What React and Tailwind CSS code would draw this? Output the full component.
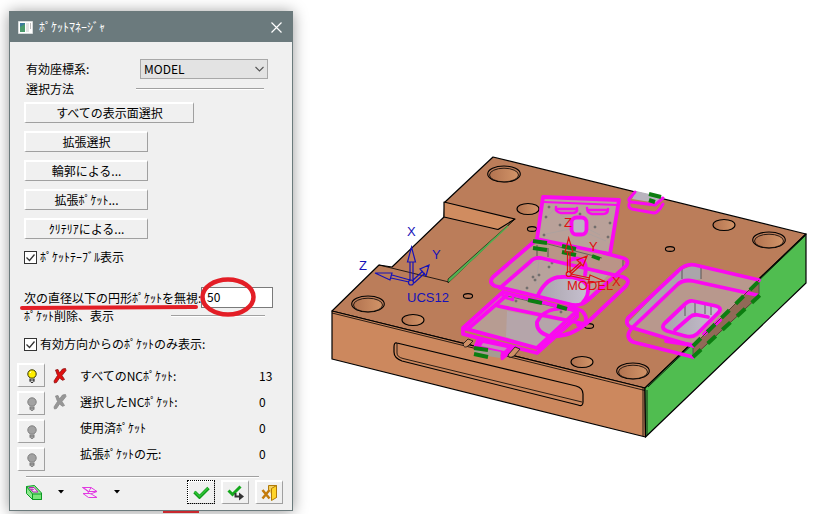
import React from "react";

const face =
  "cursor-default border-t-2 border-l-2 border-r border-b border-t-white border-l-white border-r-[#a0a0a0] border-b-[#a0a0a0] bg-[#f0f0f0]";

function PushButton({ children, wide = false }) {
  return (
    <button type="button" className={`${face} h-[21px] whitespace-nowrap text-center leading-none ${wide ? "w-[170px]" : "w-[124px]"}`}>
      {children}
    </button>
  );
}

function Rule({ className }) {
  return <div className={`h-[2px] border-t border-t-[#a0a0a0] border-b border-b-white ${className}`} />;
}

function CheckRow({ id, children }) {
  return (
    <div className="flex h-5 items-center gap-[3px] pl-[14px]">
      <span className="grid size-[13px] shrink-0">
        <input id={id} type="checkbox" defaultChecked className="col-start-1 row-start-1 size-[13px] appearance-none border border-[#333] bg-white" />
        <svg viewBox="0 0 13 13" className="pointer-events-none col-start-1 row-start-1 size-[13px]" aria-hidden="true">
          <path d="M2.500 6.500l3 3 5-6" fill="none" stroke="#333" strokeWidth="1.3" />
        </svg>
      </span>
      <label htmlFor={id} className="whitespace-nowrap">{children}</label>
    </div>
  );
}

function Bulb({ on }) {
  return (
    <svg viewBox="0 0 12 14" className="h-[14px] w-3" aria-hidden="true">
      <path d="M4 9.500v2.800l1 1h2l1-1V9.500" fill={on ? "#fff" : "#aaa"} stroke={on ? "#111" : "#777"} />
      <circle cx="6" cy="5" r="4.200" fill={on ? "#ffee00" : "#a2a2a2"} stroke={on ? "#333300" : "#808080"} />
      {on && <path d="M4 4l1-1.500" stroke="#fff" />}
      <path d="M4 11h4" stroke={on ? "#111" : "#777"} />
    </svg>
  );
}

function Cross({ color, edge }) {
  return (
    <svg viewBox="0 0 14 16" className="h-4 w-[14px]" aria-hidden="true">
      <path d="M2.500 2L5 1.500 6.500 5 9.500 1l3-.5.5 2L9 7.500l2.500 4-2 .8L6.500 10 3.500 14.500l-2 .5-.5-2L4.500 7.500z" fill={color} stroke={edge} strokeWidth=".8" />
    </svg>
  );
}

const pockets = [
  { name: "すべてのNCﾎﾟｹｯﾄ:", count: 13, on: true, cross: ["#e01010", "#8d1010"] },
  { name: "選択したNCﾎﾟｹｯﾄ:", count: 0, cross: ["#979797", "#8a8a8a"] },
  { name: "使用済ﾎﾟｹｯﾄ", count: 0 },
  { name: "拡張ﾎﾟｹｯﾄの元:", count: 0 },
];

function Caret() {
  return (
    <svg viewBox="0 0 6 4" className="h-1 w-[6px]" aria-hidden="true">
      <path d="M0 0h6L3 3.500z" fill="#000" />
    </svg>
  );
}

function PocketDialog() {
  return (
    <section className="w-[284px] border border-[#6b7a7c] bg-[#f0f0f0] text-black shadow-[0_1px_14px_rgba(0,0,0,0.4)]">
      <header className="flex h-[30px] items-center bg-[#6b7a7d] pl-2 pr-[10px] text-white">
        <svg viewBox="0 0 15 13" className="h-[13px] w-[15px]" aria-hidden="true">
          <path d="M.5 .5h14v12H.5z" fill="#fff" stroke="#d5dada" />
          <path d="M2 2h5v9H2z" fill="#3d7c9c" />
          <path d="M2 6l5-3v8H2z" fill="#4b9a6c" />
          <path d="M8 2h3v9H8z" fill="#e3e3e3" />
          <path d="M12 2h1v6h-1z" fill="#bbb" />
        </svg>
        <h1 className="ml-[6px] flex-1 text-[12px]">ﾎﾟｹｯﾄﾏﾈｰｼﾞｬ</h1>
        <button type="button" aria-label="閉じる">
          <svg viewBox="0 0 11 11" className="size-[11px]" aria-hidden="true">
            <path d="M.5 .5l10 10M10.500 .5l-10 10" stroke="#fff" strokeWidth="1.2" />
          </svg>
        </button>
      </header>

      <form className="pt-[17px] pb-[6px]">
        <div className="flex h-5 items-center pl-4">
          <label htmlFor="ucs" className="w-[114px]">有効座標系:</label>
          <div className="grid h-5 w-32">
            <select id="ucs" className="col-start-1 row-start-1 h-5 appearance-none border border-[#a8a8a8] bg-[#e3e3e3] pl-[3px] leading-none">
              <option>MODEL</option>
            </select>
            <svg viewBox="0 0 9 6" className="pointer-events-none col-start-1 row-start-1 mr-1 h-[6px] w-[9px] self-center justify-self-end" aria-hidden="true">
              <path d="M.5 1l4 4 4-4" fill="none" stroke="#555" strokeWidth="1.1" />
            </svg>
          </div>
        </div>
        <div className="flex h-5 items-center pl-4">
          <h2 className="w-[110px]">選択方法</h2>
          <Rule className="w-32" />
        </div>

        <div className="mt-[3px] flex flex-col items-start gap-2 pl-[14px]">
          <PushButton wide>すべての表示面選択</PushButton>
          <PushButton>拡張選択</PushButton>
          <PushButton>輪郭による...</PushButton>
          <PushButton>拡張ﾎﾟｹｯﾄ...</PushButton>
          <PushButton>ｸﾘﾃﾘｱによる...</PushButton>
        </div>

        <div className="mt-2">
          <CheckRow id="table">ﾎﾟｹｯﾄﾃｰﾌﾞﾙ表示</CheckRow>
        </div>

        <div className="relative mt-5 flex h-[21px] items-center pl-[14px]">
          <label htmlFor="diameter" className="w-[177px] whitespace-nowrap">次の直径以下の円形ﾎﾟｹｯﾄを無視:</label>
          <input id="diameter" type="text" defaultValue="50" className="h-[21px] w-[72px] border border-[#7a7a7a] bg-white pl-[5px] pb-[3px]" />
          <svg viewBox="0 0 260 44" className="pointer-events-none absolute -top-3 left-2 h-11 w-[260px]" aria-hidden="true">
            <path d="M4 33L178 32" stroke="#e31e26" strokeWidth="4" strokeLinecap="round" />
            <ellipse cx="210" cy="22" rx="25.500" ry="17.500" fill="none" stroke="#e31e26" strokeWidth="4.500" />
          </svg>
        </div>
        <div className="flex h-4 items-center pl-[14px]">
          <h2 className="w-[147px]">ﾎﾟｹｯﾄ削除、表示</h2>
          <Rule className="w-[94px]" />
        </div>

        <div className="mt-[10px]">
          <CheckRow id="direction">有効方向からのﾎﾟｹｯﾄのみ表示:</CheckRow>
        </div>

        <div className="mt-[9px] flex pl-[7px]">
          <div className="flex w-9 flex-col gap-1">
            {pockets.map((p) => (
              <button key={p.name} type="button" aria-label={p.name} className={`${face} grid h-6 w-7 place-items-center`}>
                <Bulb on={p.on} />
              </button>
            ))}
          </div>
          <dl className="flex-1">
            {pockets.map((p) => (
              <div key={p.name} className="flex h-[26px] items-center">
                <dt className="flex flex-1 items-center">
                  <span className="w-[27px]">{p.cross && <Cross color={p.cross[0]} edge={p.cross[1]} />}</span>
                  {p.name}
                </dt>
                <dd className="w-[33px]">{p.count}</dd>
              </div>
            ))}
          </dl>
        </div>

        <Rule className="mt-[5px] ml-4 w-[233px]" />

        <div className="mt-[2px] flex h-6 items-center pl-4 pr-[9px]">
          <button type="button" aria-label="ﾎﾟｹｯﾄ形状" className="flex items-center gap-4">
            <svg viewBox="0 0 16 15" className="h-[15px] w-4" aria-hidden="true">
              <path d="M.5 1.500l8-1 7 7.500v6.500h-9l-6-6z" fill="#8de88d" stroke="#0b9a24" />
              <path d="M6.500 9h9v5.500h-9z" fill="#7ae57a" stroke="#0b9a24" />
              <path d="M.5 1.500l6 7.500" stroke="#0b9a24" />
              <path d="M3 2.500h5l4 4.500h-5z" fill="#f8d5f8" stroke="#b525b5" />
              <path d="M6 3v3M8 4.500H5" stroke="#b525b5" strokeWidth=".7" />
            </svg>
            <Caret />
          </button>
          <button type="button" aria-label="輪郭形状" className="ml-[18px] flex items-center gap-4">
            <svg viewBox="0 0 16 13" className="h-[13px] w-4" fill="none" stroke="#e23ae2" aria-hidden="true">
              <path d="M.5 1.500h8.500l6 4H6zM1 7.500h7.500l6.500 4H6.500zM.5 1.500l1 0 5 4M9 1.500L6 7M15 5.500L8.500 8" />
            </svg>
            <Caret />
          </button>
          <div className="ml-auto flex gap-[6px]">
            <button type="button" aria-label="OK" className={`${face} grid h-6 w-7 place-items-center outline-1 -outline-offset-1 outline-dotted outline-black`}>
              <svg viewBox="0 0 17 13" className="h-[13px] w-[17px]" aria-hidden="true">
                <path d="M1.500 6l5 5L15.500 2" fill="none" stroke="#129c1b" strokeWidth="3.500" />
                <path d="M1.500 5.500l5 5L15 2" fill="none" stroke="#2fc436" strokeWidth="1.500" />
              </svg>
            </button>
            <button type="button" aria-label="適用" className={`${face} grid h-6 w-7 place-items-center`}>
              <svg viewBox="0 0 18 16" className="h-4 w-[18px]" aria-hidden="true">
                <path d="M1.500 5.500l4 4 8-8" fill="none" stroke="#14a81c" strokeWidth="3" />
                <path d="M8.500 8v3.500h4" fill="none" stroke="#333" strokeWidth="2" />
                <path d="M12 7.500l5 4-5 4z" fill="#333" />
              </svg>
            </button>
            <button type="button" aria-label="終了" className={`${face} grid h-6 w-7 place-items-center`}>
              <svg viewBox="0 0 17 17" className="size-[17px]" aria-hidden="true">
                <path d="M7.500 6V1.500h8v12h-3" fill="#f3d060" stroke="#b07a08" />
                <path d="M10.500 4.500l5-3v12l-5 3z" fill="#ffd42a" stroke="#b07a08" />
                <path d="M1.500 6l7 8.500M8.500 6l-7 8.500" stroke="#c47b0c" strokeWidth="2.500" />
              </svg>
            </button>
          </div>
        </div>
      </form>
    </section>
  );
}

const boreHoles = [[504, 174], [368, 304], [769, 240], [633, 371]];
const pinHoles = [[528, 209], [413, 320], [724, 225], [582, 362]];
const tapHoles = [[532, 229], [468, 296], [670, 249], [589, 326]];
const screws = [[549, 207], [546, 217], [560, 225], [544, 235], [580, 214], [595, 227], [610, 223], [608, 237], [549, 267], [552, 263], [533, 277], [535, 280], [539, 275], [527, 288], [516, 301], [561, 312]];

function MoldPlate() {
  return (
    <svg viewBox="293 0 527 514" className="block h-auto w-full" role="img" aria-label="NCﾎﾟｹｯﾄ">
      <defs>
        <linearGradient id="bore" x1="0" x2="1">
          <stop offset="0" stopColor="#b27350" />
          <stop offset="1" stopColor="#d29468" />
        </linearGradient>
        <linearGradient id="lilac" x1="0" x2="1">
          <stop offset="0" stopColor="#aaa4ad" />
          <stop offset="1" stopColor="#c6c0cf" />
        </linearGradient>
      </defs>

      <g stroke="#000" strokeWidth="1.200" strokeLinejoin="round">
        <path d="M332 311L379 265 392 267 444 217 445 202 493 157 806 234 645 388z" fill="#bb7d5a" />
        <path d="M332 311L645 388 645.500 437 332 359z" fill="#cc885e" />
        <path d="M645 388L806 234V283L645.500 437z" fill="#50bd50" />
        <path d="M444 202L515 219 498 229.500 444 217z" fill="#d08c60" />
        <path d="M332 313L645 390.500M643 388V436M647 390V435M648 387L805 236M379 265L449 282" fill="none" strokeWidth=".8" />
        <path d="M515 219L448 279V283z" fill="#52b050" strokeWidth=".6" />
        <path d="M508 226L449 281" stroke="#52b050" strokeWidth="1.500" />
        <path d="M397 343L576 386Q583 388 583 394V402Q583 407 578 405L402 361Q394 358 394 352V347Q394 342 397 343z" fill="#cc885e" />
        <path d="M397 343V353Q397 357 403 358.500L582 402" fill="none" strokeWidth=".8" />
      </g>

      <g stroke="#000" strokeWidth="1.100">
        {boreHoles.map(([x, y]) => (
          <g key={x}>
            <ellipse cx={x} cy={y} rx="16.300" ry="8" fill="#bb7d5a" />
            <ellipse cx={x} cy={y + 1} rx="14.500" ry="6.800" fill="url(#bore)" strokeWidth=".8" />
          </g>
        ))}
        {pinHoles.map(([x, y]) => <ellipse key={x} cx={x} cy={y} rx="11" ry="5.500" fill="url(#bore)" />)}
        {tapHoles.map(([x, y]) => <ellipse key={x} cx={x} cy={y} rx="4.600" ry="2.400" fill="#bb7d5a" />)}
      </g>

      <g stroke="none">
        <path d="M543 197L619 200 610 254 537 239z" fill="#b9a199" />
        <path d="M537 242L492 278 495 286 572 305 585 301 625 265 623 258 602 253z" fill="#ba9487" />
        <path d="M535 258L500 288 572 305 587 299 608 275 540 258z" fill="#b8a29c" />
        <path d="M503 292L463 328 537 348 575 312z" fill="#b79c92" />
        <path d="M507 311L565 322 537 347 506 337z" fill="#b5a5aa" />
        <path d="M636 191L663 197 657 203 632 199z" fill="#b8b3bd" />
        <path d="M695 265L759 280V296L693 357 693 346 628 325 678 271z" fill="#b8988d" />
        <path d="M678 271L695 265 701 266V279L683 281 634 326 628 323z" fill="#aaa5aa" />
        <path d="M759 280V296L693 357V346z" fill="#916957" />
        <path d="M693 301L718 306 720 312 695 336 665 331 665 325 685 304z" fill="url(#lilac)" />
      </g>

      <path d="M537 245V256M548 248V257M682 268V279M701 266V279M685 305V316M695 302V313M705 304V314M711 306V315M623 260V267M759 280V294M693 346V357" fill="none" stroke="#444" strokeWidth=".8" />
      <path d="M540 242L602 258M507 296L573 311" fill="none" stroke="#555" strokeWidth=".8" />
      <path d="M546 234L575 228 606 241M560 215L600 235M545 219L560 203M520 272L539 260 536 284" fill="none" stroke="#a8a0a0" strokeWidth=".7" />
      <path d="M540 295Q548 277 562 277L582 279Q590 287 586 297 582 304 574 304z" fill="url(#lilac)" />
      {screws.map(([x, y]) => <circle key={`${x}-${y}`} cx={x} cy={y} r="1" fill="#999" stroke="#444" strokeWidth=".6" />)}

      <g fill="none" stroke="#fa0af0" strokeWidth="3.800" strokeLinejoin="round" strokeLinecap="round">
        <path d="M543 197L619 200 610 254 600 252 537 239z" />
        <path d="M544 202L617 205" strokeWidth="2" />
        <path d="M556 207Q555 212 561 213H572Q578 213 577 208M587 208Q587 213 592 214H603Q608 214 608 209M557 209H576M588 210H607" strokeWidth="2.500" />
        <rect x="571.500" y="217.500" width="15" height="17" rx="5" fill="#bbb5c2" />
        <path d="M536 240L493 277Q488 283 495 286L573 305Q582 306 588 300L626 266Q630 260 623 258L604 253" />
        <path d="M500 288L530 262Q534 257 541 258L623 277Q631 280 626 286L588 322Q570 338 549 336Q536 332 537 322Q541 312 555 309Q574 306 582 311Q588 317 585 323L578 325" />
        <path d="M538 295Q547 277 561 277Q582 276 588 287Q589 296 583 302M568 263Q571 257 580 259Q588 262 585 275" />
        <path d="M503 292L463 328V334L537 353 577 317V311L537 348 463 328M503 292L577 311M498 306L585 324M507 295L469 328" />
        <path d="M503 292V297L513 300V295" strokeWidth="2.500" />
        <path d="M478 339L517 347 502 359 501 352 475 346z" fill="#fa0af0" strokeWidth="2.500" />
        <path d="M635 192L629 199Q628 201 631 202L655 205 663 198M629 204Q628 208 632 209L654 213Q658 213 663 204" strokeWidth="3" />
        <path d="M759 280L695 265Q686 263 678 271L628 318Q624 325 633 328L693 346" />
        <path d="M757 295L693 281Q683 279 677 285L632 328Q624 337 633 342L693 357" />
        <path d="M693 301L716 306Q723 308 718 313L697 334Q692 338 685 336L667 331Q660 328 665 323L685 304Q689 300 693 301z" />
        <path d="M675 330L690 317Q693 314 698 315L708 317M666 341L692 345M704 334L720 320" />
      </g>
      <path d="M483 343L507 348 504 351 481 346z" fill="#c58ab8" />
      <path d="M475 347L501 352 500 358 474 354z" fill="#a59c92" />

      <path d="M693 346L759 280M693 357L759 296" fill="none" stroke="#5b4036" />
      <g fill="none" stroke="#0c7d10" strokeWidth="4">
        <path d="M693 346L760 280M693 357L760 295" strokeDasharray="11 9" />
        <path d="M533 241L547 243M533 248L547 250M562 246L576 249M562 252L576 255M592 256L600 259M528 300L542 303M557 306L567 309M474 348L488 350M474 354L488 357M649 194L661 197M649 200L655 202" />
      </g>
      <g fill="#ce9066" stroke="#111" strokeWidth=".8">
        <path d="M468 339L473 341 468 346Q464 349 463 344zM515 347L520 349 514 356Q509 359 508 355z" />
      </g>

      <g fill="none" stroke="#1612b8" strokeWidth="1.200">
        <path d="M410 281V262M413 281V262M407.500 262L411.500 247 415.500 262zM409 282L391 278M410 280L392 275M375 273L392 273 390 280zM412 281L423 271M414 283L425 273M429 265L420 269 426 276z" />
        <circle cx="411" cy="282.500" r="2.500" />
      </g>
      <g fill="none" stroke="#e01010" strokeWidth="1.200">
        <path d="M567.500 273V252M570 273V252M565 252L568.700 238 573 252zM570 272L581 262M571 274L582 264M587 256L577 260 583 266zM571 274L590 278M571 276L590 280M604 281L590 275 588 283z" />
        <circle cx="568.700" cy="274" r="2.500" />
      </g>
      <g className="font-['Liberation_Sans',sans-serif] text-[13px]" fill="#1612b8">
        <text x="407" y="236">X</text>
        <text x="432" y="259">Y</text>
        <text x="359" y="270">Z</text>
        <text x="407" y="302">UCS12</text>
      </g>
      <g className="font-['Liberation_Sans',sans-serif] text-[13px]" fill="#e01010">
        <text x="564" y="227">Z</text>
        <text x="589" y="251">Y</text>
        <text x="612" y="286">X</text>
        <text x="567" y="290">MODEL</text>
      </g>
    </svg>
  );
}

export default function App() {
  return (
    <main className="flex min-h-screen items-start overflow-hidden bg-white font-['Noto_Sans_CJK_JP',sans-serif] text-[12px] leading-4">
      <div className="shrink-0 pt-[11px] pl-[9px]">
        <PocketDialog />
        <div className="ml-[154px] h-[2px] w-9 bg-[#c8282e]" />
      </div>
      <div className="min-w-0 flex-1">
        <MoldPlate />
      </div>
    </main>
  );
}
